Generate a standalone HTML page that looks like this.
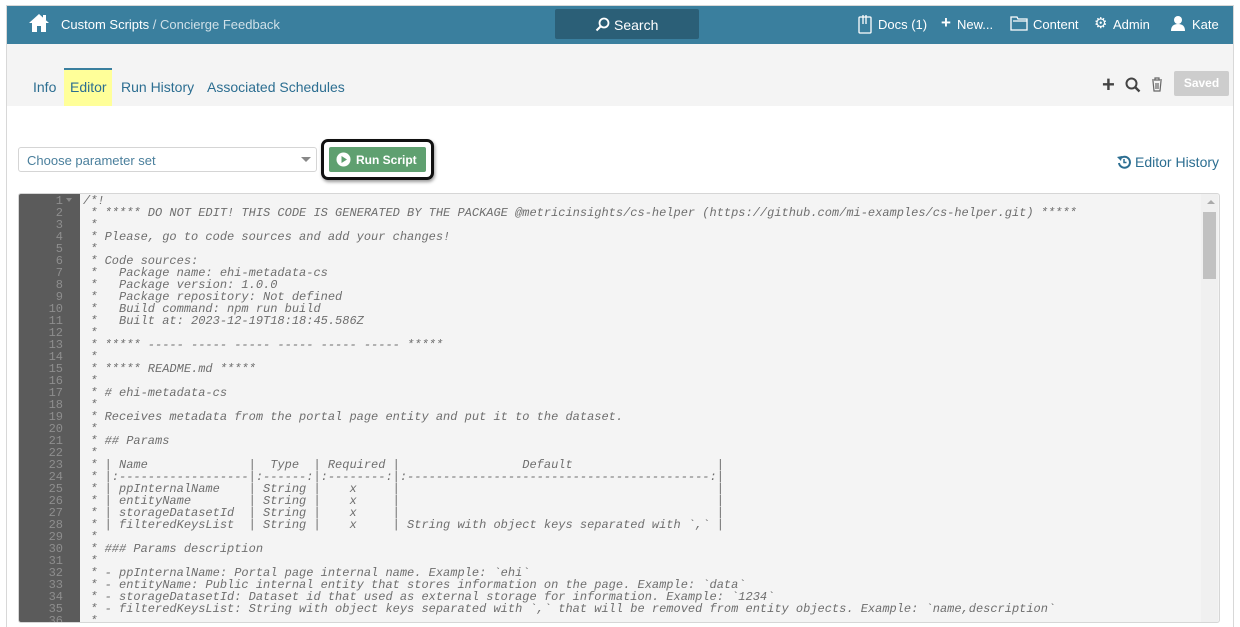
<!DOCTYPE html>
<html><head><meta charset="utf-8"><style>
*{margin:0;padding:0;box-sizing:border-box}
body{width:1240px;height:627px;background:#fff;font-family:"Liberation Sans",sans-serif;position:relative;overflow:hidden}
.frame{position:absolute;left:6px;top:5px;width:1228px;height:622px;border:1px solid #d8d8d8;border-bottom:none;background:#fff}
.hdr{position:absolute;left:7px;top:6px;width:1226px;height:38px;background:#3a7f9e;color:#fff;font-size:13px}
.hdr span{position:absolute;top:11px}
.search{position:absolute;left:548px;top:3px;width:144px;height:30px;background:#2b5f77;border-radius:2px}
.tabs{position:absolute;left:7px;top:44px;width:1226px;height:62px;background:#f4f4f4}
.tab{position:absolute;top:35px;font-size:14px;color:#2c6e91}
.code{position:absolute;left:18px;top:193px;width:1202px;height:430px;border:1px solid #d6d6d6;border-radius:3px;background:#f4f4f4;overflow:hidden}
.gut{position:absolute;left:0;top:0;width:61px;height:100%;background:#5b5b5b}
pre{font-family:"Liberation Mono",monospace;font-size:12px;line-height:12px}
.nums{position:absolute;left:0;top:0;width:44px;text-align:right;color:#8e8e8e;padding-top:1px}
.txt{position:absolute;left:64px;top:1px;color:#6e6e6e;font-style:italic}
</style></head><body>
<div class="frame"></div>
<div class="hdr">
<svg style="position:absolute;left:21px;top:7px" width="22" height="20" viewBox="0 0 22 20"><path d="M11 1 L1 10 L4 10 L4 19 L9 19 L9 13 L13 13 L13 19 L18 19 L18 10 L21 10 Z" fill="#fff"/><rect x="15" y="2" width="3" height="5" fill="#fff"/></svg>
<span style="left:54px">Custom Scripts <span style="position:static;color:#cfe0e8">/ Concierge Feedback</span></span>
<div class="search"><svg style="position:absolute;left:40px;top:8px" width="15" height="15" viewBox="0 0 15 15"><circle cx="9" cy="6" r="4.5" stroke="#fff" stroke-width="1.8" fill="none"/><path d="M6 9 L1.5 13.5" stroke="#fff" stroke-width="2"/></svg><span style="left:59px;top:8px;font-size:14px">Search</span></div>
<svg style="position:absolute;left:851px;top:8px" width="14" height="20" viewBox="0 0 14 20"><rect x="1" y="3" width="12" height="16" rx="1" fill="none" stroke="#fff" stroke-width="1.3"/><path d="M5 1 V10 M8 1 V10" stroke="#fff" stroke-width="1.3"/></svg>
<span style="left:871px">Docs (1)</span>
<span style="left:934px;font-size:17px;top:7px;font-weight:bold">+</span><span style="left:950px">New...</span>
<svg style="position:absolute;left:1003px;top:10px" width="18" height="15" viewBox="0 0 18 15"><path d="M1 1 H7 L8 3 H17 V14 H1 Z M3 5 H17" fill="none" stroke="#fff" stroke-width="1.3"/></svg>
<span style="left:1026px">Content</span>
<span style="left:1087px;top:8px;font-size:15px">⚙</span><span style="left:1106px">Admin</span>
<svg style="position:absolute;left:1163px;top:9px" width="16" height="16" viewBox="0 0 16 16"><circle cx="8" cy="5" r="4" fill="#fff"/><path d="M1 16 Q1 9 8 9 Q15 9 15 16 Z" fill="#fff"/></svg>
<span style="left:1185px">Kate</span>
</div>
<div class="tabs">
<span class="tab" style="left:26px">Info</span>
<div style="position:absolute;left:57px;top:24px;width:48px;height:38px;background:#ffff99;border-top:2px solid #3a7f9e"></div>
<span class="tab" style="left:63px">Editor</span>
<span class="tab" style="left:114px">Run History</span>
<span class="tab" style="left:200px">Associated Schedules</span>
<span style="position:absolute;left:1095px;top:28px;font-size:22px;font-weight:bold;color:#444">+</span>
<svg style="position:absolute;left:1118px;top:33px" width="16" height="16" viewBox="0 0 16 16"><circle cx="6.5" cy="6.5" r="5" stroke="#444" stroke-width="2" fill="none"/><path d="M10 10 L14.5 14.5" stroke="#444" stroke-width="2.4"/></svg>
<svg style="position:absolute;left:1144px;top:33px" width="12" height="15" viewBox="0 0 12 15"><path d="M1 3 H11 M4 3 V1 H8 V3 M2 4 L3 14 H9 L10 4 M5 6 V12 M7 6 V12" stroke="#666" stroke-width="1.2" fill="none"/></svg>
<div style="position:absolute;left:1167px;top:27px;width:55px;height:25px;background:#cdcdcd;border-radius:2px;color:#fff;font-size:12px;font-weight:bold;text-align:center;line-height:25px">Saved</div>
</div>
<div style="position:absolute;left:18px;top:147px;width:299px;height:25px;border:1px solid #d5d5d5;border-radius:3px;background:#fff">
<span style="position:absolute;left:8px;top:5px;font-size:13px;color:#4a7f9c">Choose parameter set</span>
<span style="position:absolute;left:282px;top:9px;border-left:5px solid transparent;border-right:5px solid transparent;border-top:5px solid #888"></span></div>
<div style="position:absolute;left:321px;top:139px;width:113px;height:41px;border:3px solid #111;border-radius:7px;box-shadow:1px 2px 3px rgba(0,0,0,.4)"></div>
<div style="position:absolute;left:329px;top:147px;width:97px;height:25px;background:#5fa070;border-radius:2px;color:#fff;font-size:12px;font-weight:bold">
<svg style="position:absolute;left:7px;top:5px" width="15" height="15" viewBox="0 0 15 15"><circle cx="7.5" cy="7.5" r="7" fill="#fff"/><path d="M5.5 4 L11 7.5 L5.5 11 Z" fill="#5fa070"/></svg>
<span style="position:absolute;left:27px;top:6px">Run Script</span></div>
<svg style="position:absolute;left:1117px;top:155px" width="14" height="14" viewBox="0 0 14 14"><path d="M3 4 A5.5 5.5 0 1 1 2 8" stroke="#2c6e91" stroke-width="2" fill="none"/><path d="M0 2 L4 6 L5 1 Z" fill="#2c6e91"/><path d="M7 4 V7.5 H9.5" stroke="#2c6e91" stroke-width="1.5" fill="none"/></svg>
<span style="position:absolute;left:1135px;top:154px;font-size:14px;color:#2c6e91">Editor History</span>
<div class="code">
<div class="gut"><pre class="nums">1
2
3
4
5
6
7
8
9
10
11
12
13
14
15
16
17
18
19
20
21
22
23
24
25
26
27
28
29
30
31
32
33
34
35
36</pre><span style="position:absolute;left:47px;top:4px;border-left:3px solid transparent;border-right:3px solid transparent;border-top:4px solid #888"></span></div>
<pre class="txt">/*!
 * ***** DO NOT EDIT! THIS CODE IS GENERATED BY THE PACKAGE @metricinsights/cs-helper (https://github.com/mi-examples/cs-helper.git) *****
 *
 * Please, go to code sources and add your changes!
 *
 * Code sources:
 *   Package name: ehi-metadata-cs
 *   Package version: 1.0.0
 *   Package repository: Not defined
 *   Build command: npm run build
 *   Built at: 2023-12-19T18:18:45.586Z
 *
 * ***** ----- ----- ----- ----- ----- ----- *****
 *
 * ***** README.md *****
 *
 * # ehi-metadata-cs
 *
 * Receives metadata from the portal page entity and put it to the dataset.
 *
 * ## Params
 *
 * | Name              |  Type  | Required |                 Default                    |
 * |:------------------|:------:|:--------:|:------------------------------------------:|
 * | ppInternalName    | String |    x     |                                            |
 * | entityName        | String |    x     |                                            |
 * | storageDatasetId  | String |    x     |                                            |
 * | filteredKeysList  | String |    x     | String with object keys separated with `,` |
 *
 * ### Params description
 *
 * - ppInternalName: Portal page internal name. Example: `ehi`
 * - entityName: Public internal entity that stores information on the page. Example: `data`
 * - storageDatasetId: Dataset id that used as external storage for information. Example: `1234`
 * - filteredKeysList: String with object keys separated with `,` that will be removed from entity objects. Example: `name,description`
 *</pre>
<div style="position:absolute;right:1px;top:0;width:17px;height:100%;background:#f0f0f0"></div>
<div style="position:absolute;right:4px;top:6px;border-left:4px solid transparent;border-right:4px solid transparent;border-bottom:4px solid #aaa"></div>
<div style="position:absolute;right:3px;top:18px;width:13px;height:67px;background:#c1c1c1"></div>
</div>
</body></html>
